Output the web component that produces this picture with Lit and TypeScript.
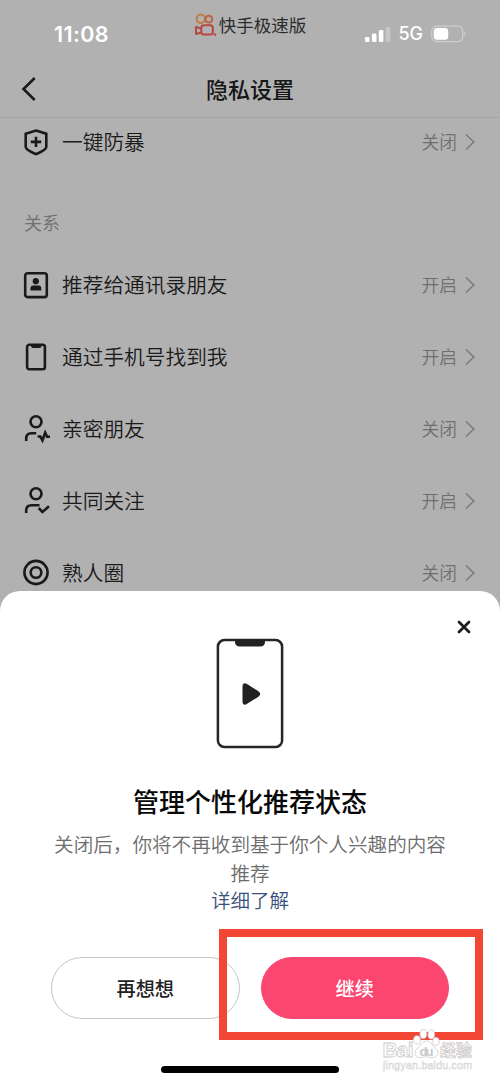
import { LitElement, html, css, svg } from "lit";
import { customElement, property } from "lit/decorators.js";

const icons: Record<string, unknown> = {
  shield: svg`<path d="M14 2.500 24.300 5.800V19C24.300 22 18.500 24.200 14 26.100C9.500 24.200 3.700 22 3.700 19V5.800Z"/><path d="M14 8.700v10.400M8.800 13.900h10.400"/>`,
  contacts: svg`<rect x="3.200" y="2.300" width="21.600" height="23.800" rx="2.400"/><g fill="currentColor" stroke="none"><circle cx="13.800" cy="10.200" r="3.100"/><path d="M8.500 19.400V17.300Q8.500 14.600 11.200 14.600H16.600Q19.300 14.600 19.300 17.300V19.400Z"/></g>`,
  phone: svg`<rect x="5.100" y="1.700" width="17.800" height="24.500" rx="2.200"/><path d="M9 1.700h10.500v1.300q0 1.900-1.900 1.900H11q-2 0-2-1.900z" fill="currentColor" stroke="none"/>`,
  close: svg`<circle cx="14" cy="6.800" r="5.500"/><path d="M4.200 26V23.400Q4.200 18.200 9.400 18.200H14.200M15.600 21.500H18.300L20.500 25.300 23.200 17.600 25.100 21.700H28"/>`,
  mutual: svg`<circle cx="14" cy="6.800" r="5.500"/><path d="M4.200 26V23.400Q4.200 18.200 9.400 18.200H17.500M16.700 21 20.400 25 27 19.300"/>`,
  circle: svg`<circle cx="14" cy="13.500" r="11.600"/><circle cx="14" cy="13.500" r="5.300"/>`,
};

@customElement("setting-row")
export class SettingRow extends LitElement {
  static styles = css`
    :host { display: flex; align-items: center; height: 72px; padding: 0 24px 0 22px; color: #1a1a1a; }
    .icon { width: 28px; height: 28px; overflow: visible; flex: none; fill: none; stroke: currentColor; stroke-width: 2.6; }
    .label { margin-left: 12px; padding-bottom: 2px; font-size: 20.7px; font-weight: 350; line-height: 30px; flex: 1; }
    .value { padding-bottom: 2px; font-size: 17.7px; font-weight: 350; line-height: 26px; color: #6f6f6f; }
    .arrow { width: 10px; height: 18px; margin-left: 8px; margin-right: 1px; fill: none; stroke: #7c7c7c; stroke-width: 1.7; }
  `;
  @property() icon = "";
  @property() label = "";
  @property() value = "";
  render() {
    return html`
      <svg class="icon" viewBox="0 0 28 28">${icons[this.icon]}</svg>
      <span class="label">${this.label}</span>
      <span class="value">${this.value}</span>
      <svg class="arrow" viewBox="0 0 10 18"><path d="M1 1.500 8.800 9 1 16.500" /></svg>
    `;
  }
}

@customElement("app-root")
export class AppRoot extends LitElement {
  static styles = css`
    :host {
      display: block; position: relative; width: 500px; height: 1083px; overflow: hidden;
      background: #b1b1b1; font-family: "Noto Sans CJK SC", sans-serif;
    }
    .status { display: grid; grid-template-columns: 1fr auto 1fr; height: 60px; }
    .time { padding: 19px 0 0 54px; font: 600 21.500px/30px Inter, sans-serif; letter-spacing: .4px; color: #fff; }
    .app { display: flex; align-items: center; align-self: start; gap: 2px; height: 24px; padding-top: 13px; font-size: 17.500px; font-weight: 400; line-height: 24px; color: #2c2c2c; }
    .logo { width: 23px; height: 24px; flex: none; overflow: visible; fill: none; stroke-width: 2; }
    .signals { display: flex; align-items: center; justify-content: flex-end; height: 20px; padding: 24px 33px 0 0; color: #fff; }
    .bars { width: 26px; height: 16px; fill: #fff; }
    .net { margin: 0 8px 0 7px; font: 500 18px/20px Inter, sans-serif; }
    .battery { width: 36px; height: 18px; }
    .nav { display: grid; grid-template-columns: 60px 1fr 60px; align-items: center; height: 57px; border-bottom: 1px solid #a5a5a5; }
    .back { width: 16px; height: 26px; margin-left: 21px; fill: none; stroke: #1a1a1a; stroke-width: 2.600; }
    .title { padding-bottom: 1px; font-size: 22px; line-height: 32px; font-weight: 500; text-align: center; color: #161616; }
    .first { height: 47px; }
    .section { height: 55px; padding: 29px 0 0 24px; font-size: 18px; font-weight: 350; line-height: 56px; color: #707070; }
    .sheet {
      position: absolute; left: 0; right: 0; top: 591px; bottom: 0; background: #fff;
      border-radius: 20px 20px 0 0; display: flex; flex-direction: column; align-items: center;
    }
    .x { align-self: flex-end; width: 14px; height: 14px; margin: 29px 29px 0 0; stroke: #1c1c1c; stroke-width: 2.700; stroke-linecap: round; }
    .device { width: 68px; height: 112px; margin-top: 4px; }
    .heading { margin-top: 32px; font-size: 26px; line-height: 38px; font-weight: 500; color: #080808; }
    .desc { width: 396px; margin-top: 9px; font-size: 19.600px; font-weight: 350; line-height: 29px; text-align: center; color: #6c6c6c; }
    .link { font-size: 19.550px; font-weight: 350; line-height: 25px; color: #39507a; }
    .buttons { display: flex; gap: 21px; margin-top: 45px; }
    .btn { box-sizing: border-box; width: 188.500px; height: 62px; border: 1px solid #c5c5c5; border-radius: 31px; font-size: 19.200px; font-weight: 500; line-height: 60px; text-align: center; color: #222; }
    .primary { border-color: #fb4770; background: #fb4770; color: #fff; }
    .home { width: 178px; height: 7px; margin-top: 47px; border-radius: 4px; background: #000; }
    .mark { position: absolute; left: 219px; top: 929px; width: 248px; height: 95px; border: 8px solid #f34736; }
    .watermark { position: absolute; left: 380px; top: 1026px; width: 96px; height: 50px; overflow: visible; font-family: "Liberation Sans", "Noto Sans CJK SC", sans-serif; }
  `;

  render() {
    return html`
      <div class="status">
        <div class="time">11:08</div>
        <div class="app">
          <svg class="logo" viewBox="0 0 23 24">
            <circle cx="6.800" cy="5.700" r="4.200" stroke="#c17a42" /><circle cx="14.800" cy="6.200" r="3.400" stroke="#bd6240" />
            <rect x="7.300" y="12.200" width="11.500" height="9.400" rx="2.500" stroke="#b84842" />
            <path d="M7.300 15.500 2 14V21L7.300 19.500" stroke="#b84842" stroke-linejoin="round" />
            <circle cx="21" cy="21.600" r="1.300" fill="#b8443f" />
          </svg>
          <span>快手极速版</span>
        </div>
        <div class="signals">
          <svg class="bars" viewBox="0 0 26 16"><rect x="0" y="11" width="4.600" height="5" rx="1.200" /><rect x="6.900" y="7.500" width="4.600" height="8.500" rx="1.200" /><rect x="13.800" y="4" width="4.600" height="12" rx="1.200" /><rect x="20.700" y="1" width="4.600" height="15" rx="1.200" opacity=".28" /></svg>
          <span class="net">5G</span>
          <svg class="battery" viewBox="0 0 36 18"><rect x=".8" y="1.200" width="31" height="15.400" rx="5" fill="none" stroke="#cfcfcf" stroke-width="1.200" /><rect x="2.800" y="3" width="14.400" height="11.800" rx="3" fill="#fff" /><path d="M33.300 6.200Q36.300 8.800 33.300 11.600Z" fill="#cfcfcf" /></svg>
        </div>
      </div>
      <div class="nav">
        <svg class="back" viewBox="0 0 16 26"><path d="M13.700 2 2.500 13 13.700 24" /></svg>
        <div class="title">隐私设置</div>
      </div>
      <setting-row class="first" icon="shield" label="一键防暴" value="关闭"></setting-row>
      <div class="section">关系</div>
      <setting-row icon="contacts" label="推荐给通讯录朋友" value="开启"></setting-row>
      <setting-row icon="phone" label="通过手机号找到我" value="开启"></setting-row>
      <setting-row icon="close" label="亲密朋友" value="关闭"></setting-row>
      <setting-row icon="mutual" label="共同关注" value="开启"></setting-row>
      <setting-row icon="circle" label="熟人圈" value="关闭"></setting-row>

      <div class="sheet" lang="zh-CN">
        <svg class="x" viewBox="0 0 14 14"><path d="M2 2 12 12M12 2 2 12" /></svg>
        <svg class="device" viewBox="0 0 68 112">
          <rect x="1.900" y="2.100" width="64.200" height="106.800" rx="6.500" fill="none" stroke="#262626" stroke-width="2.500" />
          <path d="M19 2H49V3.500Q49 8.500 44 8.500H24Q19 8.500 19 3.500Z" fill="#222" />
          <path d="M27.500 48.500V63.500Q27.500 67 30.500 65L42 57.800Q44.500 56 42 54.200L30.500 46.800Q27.500 45 27.500 48.500Z" fill="#222" stroke="#222" stroke-width="2" />
        </svg>
        <div class="heading">管理个性化推荐状态</div>
        <div class="desc">关闭后，你将不再收到基于你个人兴趣的内容推荐</div>
        <div class="link">详细了解</div>
        <div class="buttons">
          <div class="btn">再想想</div>
          <div class="btn primary">继续</div>
        </div>
        <div class="home"></div>
      </div>
      <div class="mark"></div>
      <svg class="watermark" viewBox="0 0 96 50">
        <g fill="#fff" stroke="#cfcaca" stroke-width=".8">
          <text x="2.500" y="31" font-size="21" font-weight="700" textLength="31">Bai</text>
          <text x="60" y="30" font-size="16" font-weight="700" textLength="32">经验</text>
          <ellipse cx="37" cy="14" rx="3.400" ry="4.200" /><ellipse cx="43.300" cy="8" rx="3.300" ry="4.600" /><ellipse cx="51.300" cy="8.500" rx="3.300" ry="4.600" /><ellipse cx="56" cy="15.500" rx="3.300" ry="4" />
          <path d="M46.500 15C51.500 15 52 20 56 22.500C61 27 56 33 51 31.500Q46.500 30 42 31.500C36 33 32.500 27 37 22.500C41 20 41.500 15 46.500 15Z" />
        </g>
        <text x="39.500" y="30" font-size="13" font-weight="700" fill="#c9c9c9" textLength="14">du</text>
        <text x="3" y="43" font-size="10.500" fill="#fff" stroke="#d6d6d6" stroke-width=".6" textLength="89">jingyan.baidu.com</text>
      </svg>
    `;
  }
}
